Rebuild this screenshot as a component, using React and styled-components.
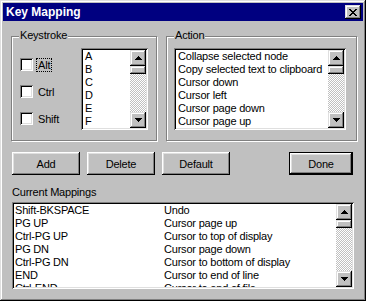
import React from 'react'
import styled, { createGlobalStyle } from 'styled-components'

const GlobalStyle = createGlobalStyle`
  body {
    margin: 0;
    background: #c0c0c0;
    font-family: "Liberation Sans", Arial, sans-serif;
    font-size: 11px;
    letter-spacing: -0.2px;
    color: #000;
  }
`

const raised = `
  box-shadow: inset -1px -1px #000, inset 1px 1px #dfdfdf,
    inset -2px -2px #808080, inset 2px 2px #fff;
`

const sunken = `
  box-shadow: inset 1px 1px #808080, inset -1px -1px #fff,
    inset 2px 2px #000, inset -2px -2px #dfdfdf;
`

const Window = styled.div`
  box-sizing: border-box;
  width: 366px;
  height: 301px;
  padding: 3px;
  background: #c0c0c0;
  ${raised}
`

const TitleBar = styled.div`
  height: 18px;
  display: flex;
  align-items: center;
  justify-content: space-between;
  padding: 0 2px 0 3px;
  background: #000080;
  color: #fff;
  font-weight: bold;
  font-size: 12px;
  letter-spacing: 0;
`

const CloseButton = styled.div`
  box-sizing: border-box;
  width: 16px;
  height: 14px;
  display: flex;
  align-items: center;
  justify-content: center;
  background: #c0c0c0;
  ${raised}
`

const Body = styled.div`
  padding: 0 6px 0 8px;
`

const TopRow = styled.div`
  display: flex;
  gap: 9px;
  margin-top: 15px;
`

const GroupBox = styled.div`
  position: relative;
  box-sizing: border-box;
  width: ${p => p.width}px;
  height: 105px;
  display: flex;
  padding: 11px 0 0 ${p => p.padLeft}px;
  border: 1px solid #808080;
  box-shadow: 1px 1px 0 #fff, inset 1px 1px 0 #fff;
`

const Legend = styled.div`
  position: absolute;
  top: -8px;
  left: 7px;
  padding: 0 1px;
  line-height: 13px;
  background: #c0c0c0;
`

const CheckColumn = styled.div`
  width: 61px;
  margin-top: 10px;
  display: flex;
  flex-direction: column;
  gap: 14px;
`

const CheckRow = styled.div`
  display: flex;
  align-items: center;
  gap: 4px;
  height: 13px;
`

const CheckBox = styled.div`
  box-sizing: border-box;
  width: 13px;
  height: 13px;
  background: #fff;
  ${sunken}
`

const CheckLabel = styled.span`
  padding: 0 1px;
  line-height: 12px;
  outline: ${p => (p.focused ? '1px dotted #000' : 'none')};
`

const ListBox = styled.div`
  box-sizing: border-box;
  width: ${p => p.width}px;
  height: ${p => p.height}px;
  margin-left: ${p => p.offset || 0}px;
  display: flex;
  padding: 2px;
  background: #fff;
  ${sunken}
`

const ListItems = styled.div`
  flex: 1;
  overflow: hidden;
`

const Item = styled.div`
  display: flex;
  height: 13px;
  line-height: 13px;
  padding-left: ${p => p.pad}px;
  white-space: nowrap;
`

const KeyCol = styled.span`
  width: 149px;
`

const ScrollBar = styled.div`
  width: 16px;
  display: flex;
  flex-direction: column;
`

const ScrollButton = styled.div`
  box-sizing: border-box;
  height: 16px;
  display: flex;
  align-items: center;
  justify-content: center;
  background: #c0c0c0;
  ${raised}
`

const Thumb = styled.div`
  box-sizing: border-box;
  height: 8px;
  background: #c0c0c0;
  ${raised}
`

const Track = styled.div`
  flex: 1;
  background: repeating-conic-gradient(#c0c0c0 0 25%, #fff 0 50%) 0 0 / 2px 2px;
`

const ButtonRow = styled.div`
  display: flex;
  gap: 7px;
  margin-top: 11px;
  padding: 0 4px 0 1px;
`

const Button = styled.div`
  box-sizing: border-box;
  width: ${p => p.width}px;
  height: 23px;
  display: flex;
  align-items: center;
  justify-content: center;
  margin-left: ${p => (p.isDefault ? 'auto' : '0')};
  background: #c0c0c0;
  border: ${p => (p.isDefault ? '1px solid #000' : 'none')};
  box-shadow: inset -1px -1px #000, inset 1px 1px #fff,
    inset -2px -2px #808080, inset 2px 2px #dfdfdf;
`

const SectionLabel = styled.div`
  margin-top: 11px;
  padding-left: 1px;
  line-height: 13px;
  margin-bottom: 3px;
`

const Arrow = ({ down }) => (
  <svg width="7" height="4" shapeRendering="crispEdges" style={{ transform: down ? 'scaleY(-1)' : 'none' }}>
    <rect x="3" y="0" width="1" height="1" fill="#000" />
    <rect x="2" y="1" width="3" height="1" fill="#000" />
    <rect x="1" y="2" width="5" height="1" fill="#000" />
    <rect x="0" y="3" width="7" height="1" fill="#000" />
  </svg>
)

const CloseGlyph = () => (
  <svg width="8" height="7" shapeRendering="crispEdges">
    {[[0, 6], [1, 5], [2, 4], [3, 3], [2, 4], [1, 5], [0, 6]].map(([a, b], y) => (
      <g key={y} fill="#000">
        <rect x={a} y={y} width="2" height="1" />
        <rect x={b} y={y} width="2" height="1" />
      </g>
    ))}
  </svg>
)

const Scroller = () => (
  <ScrollBar>
    <ScrollButton>
      <Arrow />
    </ScrollButton>
    <Thumb />
    <Track />
    <ScrollButton>
      <Arrow down />
    </ScrollButton>
  </ScrollBar>
)

const letters = ['A', 'B', 'C', 'D', 'E', 'F']

const actions = [
  'Collapse selected node',
  'Copy selected text to clipboard',
  'Cursor down',
  'Cursor left',
  'Cursor page down',
  'Cursor page up',
]

const mappings = [
  ['Shift-BKSPACE', 'Undo'],
  ['PG UP', 'Cursor page up'],
  ['Ctrl-PG UP', 'Cursor to top of display'],
  ['PG DN', 'Cursor page down'],
  ['Ctrl-PG DN', 'Cursor to bottom of display'],
  ['END', 'Cursor to end of line'],
  ['Ctrl-END', 'Cursor to end of file'],
]

const modifiers = ['Alt', 'Ctrl', 'Shift']

const App = () => (
  <>
    <GlobalStyle />
    <Window>
      <TitleBar>
        <span>Key Mapping</span>
        <CloseButton>
          <CloseGlyph />
        </CloseButton>
      </TitleBar>
      <Body>
        <TopRow>
          <GroupBox width={146} padLeft={8}>
            <Legend>Keystroke</Legend>
            <CheckColumn>
              {modifiers.map((m, k) => (
                <CheckRow key={m}>
                  <CheckBox />
                  <CheckLabel focused={k === 0}>{m}</CheckLabel>
                </CheckRow>
              ))}
            </CheckColumn>
            <ListBox width={67} height={82}>
              <ListItems>
                {letters.map(l => (
                  <Item key={l} pad={2}>{l}</Item>
                ))}
              </ListItems>
              <Scroller />
            </ListBox>
          </GroupBox>
          <GroupBox width={191} padLeft={7}>
            <Legend>Action</Legend>
            <ListBox width={172} height={82}>
              <ListItems>
                {actions.map(a => (
                  <Item key={a} pad={2}>{a}</Item>
                ))}
              </ListItems>
              <Scroller />
            </ListBox>
          </GroupBox>
        </TopRow>
        <ButtonRow>
          <Button width={68}>Add</Button>
          <Button width={68}>Delete</Button>
          <Button width={68}>Default</Button>
          <Button width={64} isDefault>Done</Button>
        </ButtonRow>
        <SectionLabel>Current Mappings</SectionLabel>
        <ListBox width={342} height={87} offset={1}>
          <ListItems>
            {mappings.map(([key, action]) => (
              <Item key={key} pad={1}>
                <KeyCol>{key}</KeyCol>
                <span>{action}</span>
              </Item>
            ))}
          </ListItems>
          <Scroller />
        </ListBox>
      </Body>
    </Window>
  </>
)

export default App
